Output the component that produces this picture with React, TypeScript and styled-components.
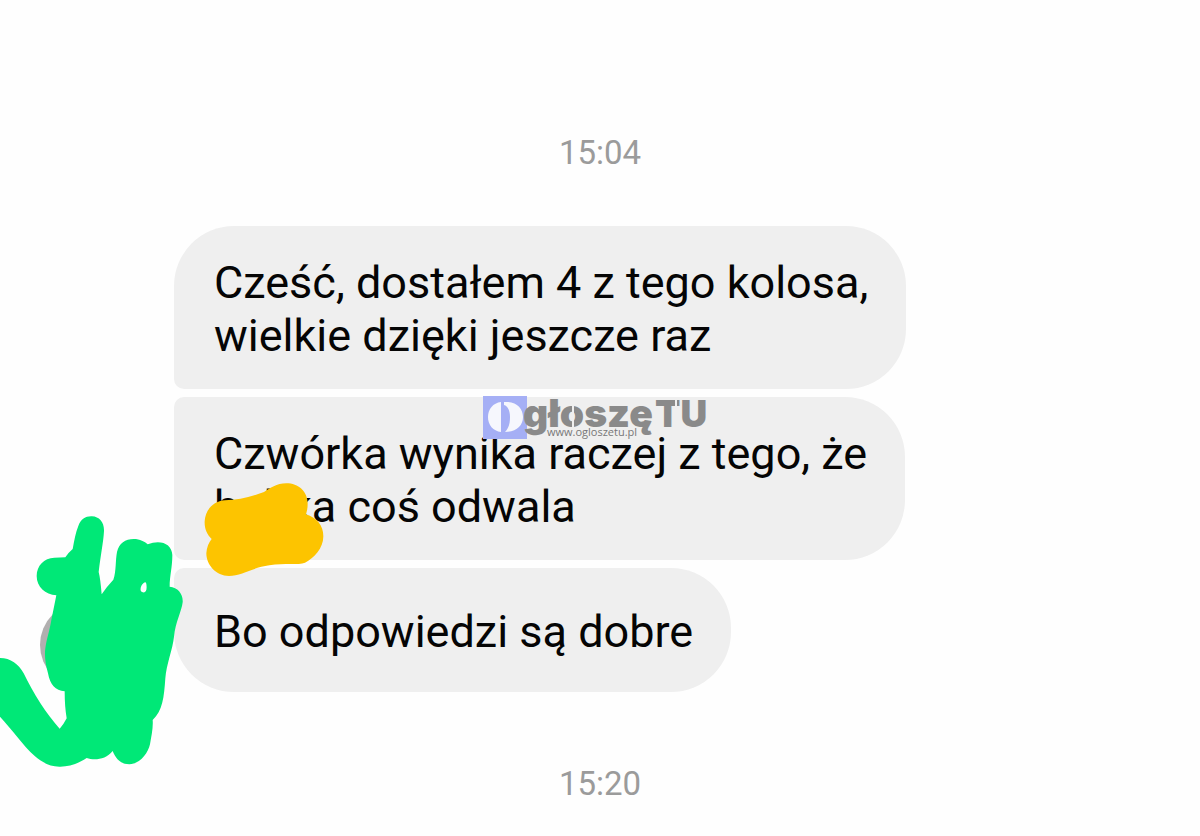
import React from "react";
import styled, { createGlobalStyle } from "styled-components";

const GlobalStyle = createGlobalStyle`
  *, *::before, *::after { box-sizing: border-box; }
  body {
    margin: 0;
    background: #fefefe;
    color: #050505;
    font-family: Roboto, "Liberation Sans", sans-serif;
  }
`;

const Conversation = styled.main`
  display: flex;
  flex-direction: column;
  padding: 133px 40px 32px;
  overflow: hidden;
`;

const Time = styled.time`
  align-self: center;
  color: #9b9b9b;
  font-size: 33px;
  line-height: 40px;
`;

const Group = styled.section`
  position: relative;
  display: flex;
  align-items: flex-end;
  gap: 48px;
  margin: 53px 0 72px;
`;

const Avatar = styled.div`
  flex: none;
  width: 86px;
  height: 86px;
  margin-bottom: 4px;
  border-radius: 50%;
  background: #b1afaf;
`;

const Bubbles = styled.div`
  display: flex;
  flex-direction: column;
  align-items: flex-start;
  gap: 8px;
`;

type Place = "first" | "middle" | "last";

const corners: Record<Place, string> = {
  first: "60px 60px 60px 10px",
  middle: "10px 60px 60px 10px",
  last: "10px 60px 60px 60px",
};

const Bubble = styled.p<{ $place: Place }>`
  display: flex;
  align-items: center;
  min-height: 124px;
  margin: 0;
  padding: 30px 38px 27px 40px;
  border-radius: ${({ $place }) => corners[$place]};
  background: #efefef;
  font-size: 45px;
  line-height: 53px;
`;

const Scribble = styled.svg<{ $left: number; $top: number }>`
  position: absolute;
  left: ${({ $left }) => $left}px;
  top: ${({ $top }) => $top}px;
`;

const Watermark = styled.svg`
  position: absolute;
  left: 443px;
  top: 169px;
  overflow: visible;
`;

const OgloszeTuMark = () => (
  <Watermark width="240" height="46" viewBox="0 0 240 46" role="img" aria-label="OgłoszęTU">
    <rect x="0" y="1" width="44" height="43" fill="#a5aff5" />
    <path d="M18 7 V37 C10 36 5 30 5 22 C5 14 10 8 18 7Z" fill="#f6f7fd" />
    <path d="M21 7 C33 6 40 13 40 22 C40 31 33 37 22 37 C26 33 27 28 27 22 C27 16 25 11 21 10Z" fill="#f6f7fd" />
    <g fill="#8a8a8a" fontFamily="Inter, sans-serif" fontWeight="900">
      <text x="40" y="32" fontSize="39">głoszę</text>
      <text x="172" y="32" fontSize="37">TU</text>
    </g>
    <path d="M193 4V33M90 10V33" stroke="#efefef" strokeWidth="2" />
    <text x="64" y="41" fontSize="11" fontFamily="'Open Sans', sans-serif" fill="#777">
      www.ogloszetu.pl
    </text>
  </Watermark>
);

const App = () => (
  <>
    <GlobalStyle />
    <Conversation>
      <Time>15:04</Time>
      <Group>
        <Avatar />
        <Bubbles>
          <Bubble $place="first">
            <span>
              Cześć, dostałem 4 z tego kolosa,
              <br />
              wielkie dzięki jeszcze raz
            </span>
          </Bubble>
          <Bubble $place="middle">
            <span>
              Czwórka wynika raczej z tego, że
              <br />
              babka coś odwala
            </span>
          </Bubble>
          <Bubble $place="last">Bo odpowiedzi są dobre</Bubble>
        </Bubbles>
        <OgloszeTuMark />
        <Scribble $left={150} $top={244} width="160" height="120" viewBox="0 0 480 360" aria-hidden="true">
          <path
            fill="#fdc400"
            d="M44 154C46 120 69 94 104 91C145 90 180 82 222 66C240 55 260 40 289 40C325 40 353 64 353 101C353 116 350 126 348 133C381 144 400 166 400 199C400 235 372 265 345 278C325 286 285 278 238 286C190 292 155 317 117 318C78 318 49 285 49 250C50 231 57 217 65 207C50 192 43 175 44 154Z"
          />
        </Scribble>
        <Scribble $left={-40} $top={274} width="200" height="280" viewBox="0 0 600 840" aria-hidden="true">
          <path
            fill="#00e877"
            fillRule="evenodd"
            d="M0 474C32 474 56 492 71 520C100 580 139 642 179 686Q190 675 200 655Q194 620 194 574C166 573 150 553 144 520C136 490 133 466 136 445C141 411 149 392 154 360L169 286C136 283 110 261 110 228C110 197 132 174 163 173L196 172Q206 157 218 147C223 120 227 97 235 78C243 56 258 48 276 49C298 50 313 67 312 93C310 128 302 164 296 216Q301 235 305 283Q320 260 340 239C349 214 346 180 351 156C357 130 376 117 401 117C420 117 434 125 443 133C481 117 516 131 517 165C517 203 509 228 509 260C534 262 550 283 548 307C545 333 526 368 522 410C518 448 499 493 496 535C492 592 488 633 458 660C460 682 454 710 450 733C444 757 424 791 388 793C359 792 346 773 338 753C318 779 283 782 260 774C237 790 208 800 181 800C151 801 126 787 105 769C68 735 34 686 0 650ZM431 249C422 256 418 272 426 276C437 281 442 271 439 252C438 246 435 246 431 249Z"
          />
        </Scribble>
      </Group>
      <Time>15:20</Time>
    </Conversation>
  </>
);

export default App;
